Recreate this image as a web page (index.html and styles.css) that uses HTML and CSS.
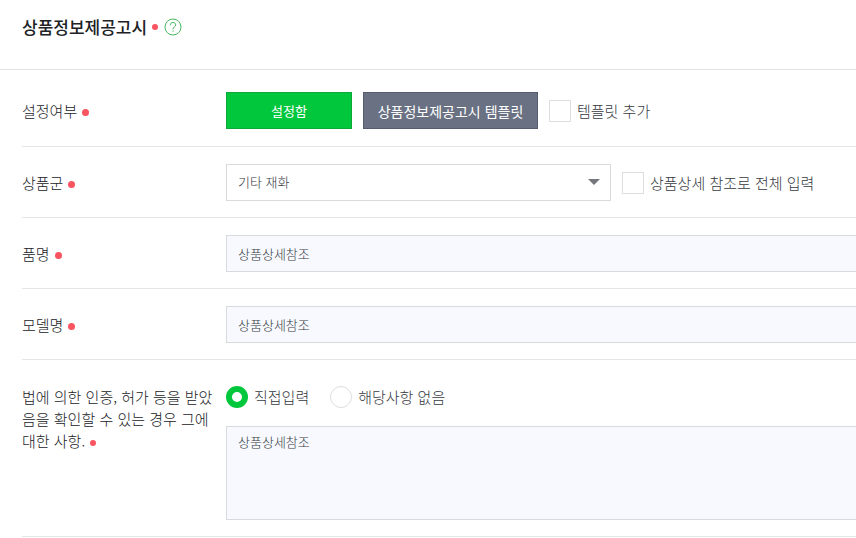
FILE: index.html
```html
<!DOCTYPE html>
<html lang="ko">
<head>
    <meta charset="UTF-8">
    <meta name="viewport" content="width=device-width, initial-scale=1">
    <title>상품정보제공고시</title>
    <link rel="stylesheet" href="styles.css">
</head>
<body>
    <header class="section-title">
        <h2>상품정보제공고시</h2>
        <span class="dot small"></span>
        <button type="button" class="help" aria-label="도움말">
            <svg width="18" height="18" viewBox="0 0 18 18" fill="none" stroke="#47b860">
                <circle cx="9" cy="9" r="8"/>
                <path d="M6.3 7.2C6.3 5.4 7.4 4.5 9 4.5s2.7 1 2.7 2.4c0 1.9-2.7 2-2.7 4.3"/>
                <path d="M9 12.4v1.3"/>
            </svg>
        </button>
    </header>

    <form class="form">
        <!-- 설정여부 -->
        <div class="row first">
            <div class="name">설정여부<span class="dot"></span></div>
            <div class="content">
                <button type="button" class="btn green">설정함</button>
                <button type="button" class="btn gray">상품정보제공고시 템플릿</button>
                <label class="check"><input type="checkbox">템플릿 추가</label>
            </div>
        </div>

        <!-- 상품군 -->
        <div class="row">
            <label class="name" for="group">상품군<span class="dot"></span></label>
            <div class="content">
                <div class="select-box">
                    <select id="group">
                        <option>기타 재화</option>
                    </select>
                    <svg class="arrow" width="12" height="6" viewBox="0 0 12 6">
                        <path d="M0 0h12L6 6z" fill="#74777b"/>
                    </svg>
                </div>
                <label class="check"><input type="checkbox">상품상세 참조로 전체 입력</label>
            </div>
        </div>

        <!-- 품명 / 모델명 -->
        <div class="row">
            <label class="name" for="item">품명<span class="dot"></span></label>
            <div class="content">
                <input type="text" class="field" id="item" value="상품상세참조">
            </div>
        </div>
        <div class="row">
            <label class="name" for="model">모델명<span class="dot"></span></label>
            <div class="content">
                <input type="text" class="field" id="model" value="상품상세참조">
            </div>
        </div>

        <!-- 인증, 허가 사항 -->
        <div class="row tall">
            <label class="name" for="cert">법에 의한 인증, 허가 등을 받았음을 확인할 수 있는 경우 그에 대한 사항.<span class="dot small"></span></label>
            <div class="content column">
                <div class="radios">
                    <label class="check"><input type="radio" name="certType" checked>직접입력</label>
                    <label class="check"><input type="radio" name="certType">해당사항 없음</label>
                </div>
                <textarea class="field" id="cert">상품상세참조</textarea>
            </div>
        </div>
    </form>
</body>
</html>
```
FILE: styles.css
```css
/* 기본 스타일 */
* {
    box-sizing: border-box;
}
body {
    margin: 0;
    background-color: #fff;
    color: #202226;
    font-family: "Noto Sans CJK KR", sans-serif;
    font-size: 15px;
    font-weight: 300;
    line-height: 22px;
}
button, input, select, textarea {
    margin: 0;
    font-family: inherit;
    font-weight: inherit;
}

/* 제목 */
.section-title {
    display: flex;
    align-items: center;
    padding: 15px 22px 30px;
    border-bottom: 1px solid #e0e2e5;
}
h2 {
    margin: 0;
    font-size: 17px;
    font-weight: 500;
    line-height: 24px;
}
.help {
    display: flex;
    margin-left: 6px;
    padding: 0;
    border: none;
    background: none;
    cursor: pointer;
}

/* 필수 표시 */
.dot {
    display: inline-block;
    width: 7px;
    height: 7px;
    margin-left: 5px;
    border-radius: 50%;
    background-color: #f9545f;
    vertical-align: 1px;
}
.dot.small {
    width: 6px;
    height: 6px;
}

/* 입력 행 */
.form {
    padding-left: 22px;
}
.row {
    display: flex;
    align-items: center;
    padding: 17px 0 16px;
    border-bottom: 1px solid #e4e6e9;
}
.row.first {
    padding-top: 22px;
    padding-bottom: 17px;
}
.row.tall {
    align-items: flex-start;
    padding-top: 26px;
}
.name {
    flex: none;
    width: 204px;
    padding-right: 10px;
}
.content {
    display: flex;
    flex: 1;
    align-items: center;
    gap: 11px;
    min-width: 0;
}
.content.column {
    flex-direction: column;
    align-items: stretch;
    gap: 18px;
}

/* 버튼 */
.btn {
    height: 37px;
    padding: 0;
    border: 1px solid;
    color: #fff;
    font-size: 14px;
    font-weight: 400;
    cursor: pointer;
}
.green {
    width: 126px;
    border-color: #0ea93b;
    background-color: #00c73c;
    font-size: 13px;
}
.gray {
    width: 175px;
    border-color: #555c6d;
    background-color: #697183;
}

/* 체크박스, 라디오 */
.check {
    display: flex;
    align-items: center;
    gap: 6px;
    color: #36393e;
    white-space: nowrap;
}
.check input {
    width: 22px;
    height: 22px;
    border: 1px solid #dcdee1;
    background-color: #fff;
    appearance: none;
}
.check input[type="radio"] {
    border-radius: 50%;
}
.check input[type="radio"]:checked {
    border: 6px solid #00c73c;
}
.check input[type="checkbox"]:checked {
    background-color: #00c73c;
}
.radios {
    display: flex;
    gap: 21px;
}

/* 선택 상자 */
.select-box {
    position: relative;
    width: 385px;
}
select {
    display: block;
    width: 100%;
    height: 37px;
    padding: 0 32px 2px 11px;
    border: 1px solid #d8dadd;
    border-radius: 0;
    background-color: #fff;
    color: #36393e;
    font-size: 13px;
    appearance: none;
}
.arrow {
    position: absolute;
    top: 15px;
    right: 11px;
    pointer-events: none;
}

/* 입력창 */
.field {
    display: block;
    width: 100%;
    height: 37px;
    padding: 0 11px;
    border: 1px solid #d8dadd;
    border-right: none;
    border-radius: 0;
    background-color: #f7f9fe;
    color: #36393e;
    font-size: 13px;
}
textarea.field {
    height: 94px;
    padding: 4px 11px;
    line-height: 22px;
    resize: none;
}
```
